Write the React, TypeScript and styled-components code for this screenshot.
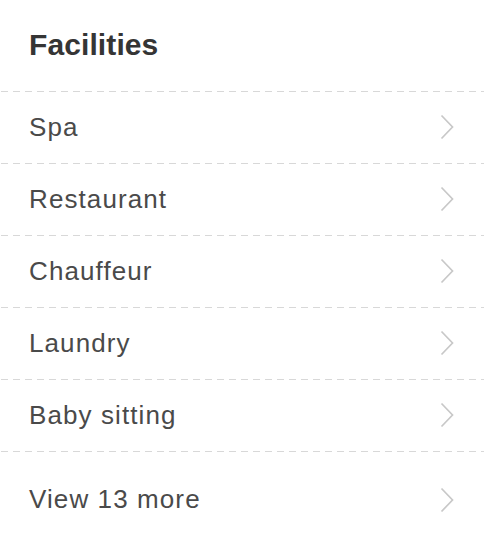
import React from "react";
import styled, { createGlobalStyle } from "styled-components";

const Global = createGlobalStyle`
  html, body { margin: 0; padding: 0; background: #fff; }
  body { font-family: "Liberation Sans", Arial, Helvetica, sans-serif; }
`;

const Panel = styled.section`
  width: 484px;
  display: flex;
  flex-direction: column;
`;

const Heading = styled.h2`
  margin: 0;
  height: 91px;
  display: flex;
  align-items: center;
  padding: 0 29px 1px;
  box-sizing: border-box;
  font-size: 30px;
  font-weight: 700;
  letter-spacing: 0.1px;
  color: #353535;
`;

const List = styled.ul`
  list-style: none;
  margin: 0;
  padding: 0;
`;

const Row = styled.li<{ $last?: boolean }>`
  height: ${(p) => (p.$last ? 96 : 72)}px;
  display: flex;
  align-items: center;
  justify-content: space-between;
  padding: ${(p) => (p.$last ? "0 30px 0 29px" : "0 30px 1px 29px")};
  box-sizing: border-box;
  border-top: 1px solid transparent;
  background-image: linear-gradient(to right, #d8d8d8 7px, transparent 7px);
  background-size: 12px 1px;
  background-repeat: repeat-x;
  background-position: 1px 0;
  background-origin: border-box;
  cursor: pointer;
`;

const Label = styled.span`
  font-size: 26px;
  letter-spacing: 1.1px;
  color: #4a4a4a;
`;

const Chevron = () => (
  <svg width="14" height="26" viewBox="0 0 14 26" fill="none">
    <path d="M1.5 1.5 L12.5 13 L1.5 24.5" stroke="#c8c8c8" strokeWidth="1.7" />
  </svg>
);

const items = ["Spa", "Restaurant", "Chauffeur", "Laundry", "Baby sitting"];

export default function App() {
  return (
    <>
      <Global />
      <Panel>
        <Heading>Facilities</Heading>
        <List>
          {items.map((it) => (
            <Row key={it}>
              <Label>{it}</Label>
              <Chevron />
            </Row>
          ))}
          <Row $last>
            <Label>View 13 more</Label>
            <Chevron />
          </Row>
        </List>
      </Panel>
    </>
  );
}
